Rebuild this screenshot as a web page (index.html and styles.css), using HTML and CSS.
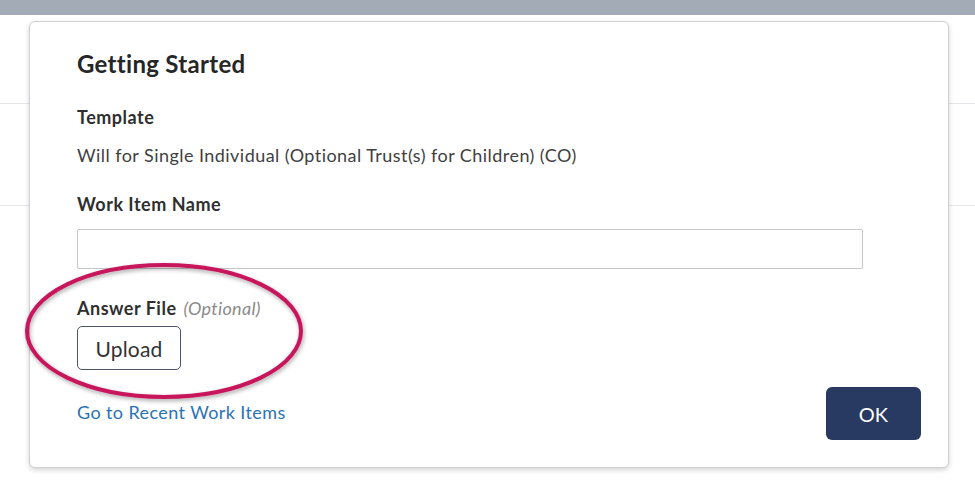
FILE: index.html
```html
<!DOCTYPE html>
<html>
<head>
<meta charset="utf-8">
<link rel="stylesheet" href="styles.css">
</head>
<body>
<div class="topbar"></div>
<div class="page">
  <div class="rule rule-a"></div>
  <div class="rule rule-b"></div>
</div>
<div class="modal">
  <h1 class="title">Getting Started</h1>
  <div class="label first">Template</div>
  <div class="value">Will for Single Individual (Optional Trust(s) for Children) (CO)</div>
  <div class="label gap">Work Item Name</div>
  <input class="field" type="text">
  <div class="label gap">Answer File <span class="optional">(Optional)</span></div>
  <button class="upload">Upload</button>
  <div class="footer">
    <a class="link" href="#">Go to Recent Work Items</a>
    <button class="ok">OK</button>
  </div>
</div>
<svg class="highlight" width="975" height="501" viewBox="0 0 975 501">
  <defs>
    <filter id="sh" x="-20%" y="-20%" width="140%" height="140%">
      <feDropShadow dx="1" dy="2" stdDeviation="2" flood-color="#000" flood-opacity="0.35"/>
    </filter>
  </defs>
  <ellipse cx="164" cy="331" rx="137" ry="66" fill="none" stroke="#c8175d" stroke-width="4" filter="url(#sh)"/>
</svg>
</body>
</html>
```
FILE: styles.css
```css
* { box-sizing: border-box; }
html, body { margin: 0; padding: 0; }
body {
  width: 975px;
  height: 501px;
  overflow: hidden;
  background: #ffffff;
  font-family: Lato, "Liberation Sans", sans-serif;
  position: relative;
}
.topbar {
  height: 15px;
  background: #a3abb6;
}
.page {
  padding-top: 88px;
}
.rule {
  height: 1px;
  background: #e4e6e9;
}
.rule-b {
  margin-top: 101px;
}
.modal {
  position: absolute;
  left: 29px;
  top: 21px;
  width: 920px;
  height: 447px;
  background: #fff;
  border: 1px solid #cfd1d4;
  border-radius: 6px;
  box-shadow: 0 2px 5px rgba(0,0,0,0.18);
  padding: 28px 27px 0 47px;
  display: flex;
  flex-direction: column;
  align-items: flex-start;
}
.title {
  margin: 0;
  font-size: 24px;
  line-height: 28px;
  font-weight: 700;
  letter-spacing: 0.3px;
  color: #262626;
}
.label {
  font-size: 18px;
  line-height: 20px;
  font-weight: 700;
  letter-spacing: 0.5px;
  color: #2f2f2f;
}
.label.first { margin-top: 29px; }
.label.gap { margin-top: 29px; }
.value {
  margin-top: 18px;
  font-size: 18px;
  line-height: 20px;
  letter-spacing: 0.45px;
  color: #3f3f3f;
}
.optional {
  font-weight: 400;
  font-style: italic;
  color: #8a8a8a;
  letter-spacing: 0.3px;
  margin-left: 2px;
}
.field {
  margin-top: 15px;
  width: 786px;
  height: 40px;
  border: 1px solid #c6c6c6;
  border-radius: 2px;
  background: #fff;
  font: inherit;
}
.upload {
  margin-top: 8px;
  width: 104px;
  height: 44px;
  border: 1px solid #4b5568;
  border-radius: 5px;
  background: #fff;
  font-family: Lato, "Liberation Sans", sans-serif;
  font-size: 21px;
  letter-spacing: 0.2px;
  color: #333;
  padding: 0;
}
.footer {
  margin-top: 17px;
  align-self: stretch;
  display: flex;
  justify-content: space-between;
  align-items: center;
}
.link {
  font-size: 18px;
  letter-spacing: 0.4px;
  color: #2b72b3;
  text-decoration: none;
  margin-top: -3px;
}
.ok {
  width: 95px;
  height: 53px;
  border: none;
  border-radius: 6px;
  background: #283a61;
  color: #fff;
  font-family: Lato, "Liberation Sans", sans-serif;
  font-size: 20px;
  padding: 0;
}
.highlight {
  position: absolute;
  left: 0;
  top: 0;
  pointer-events: none;
}
```
